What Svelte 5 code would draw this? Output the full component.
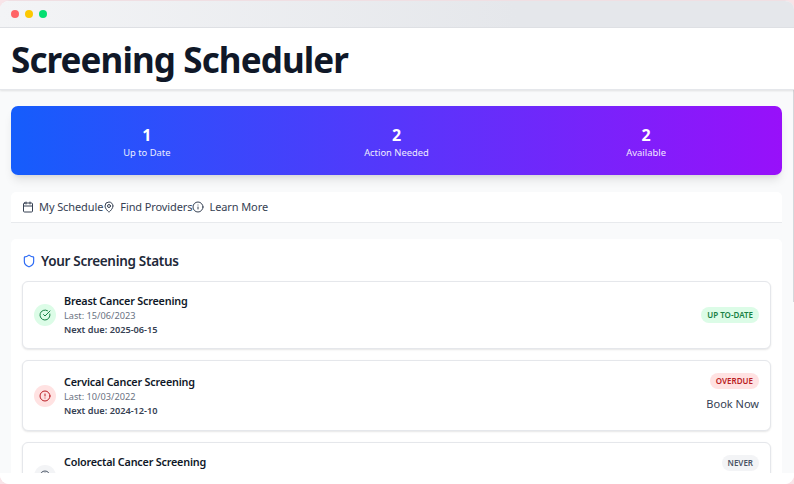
<script>
  const stats = [
    { value: 1, label: 'Up to Date', w: 47 },
    { value: 2, label: 'Action Needed', w: 64 },
    { value: 2, label: 'Available', w: 38 }
  ];
  const tabs = [
    { icon: 'calendar', label: 'My Schedule' },
    { icon: 'pin', label: 'Find Providers' },
    { icon: 'info', label: 'Learn More' }
  ];
  const screenings = [
    { name: 'Breast Cancer Screening', last: '15/06/2023', next: '2025-06-15', badge: 'UP TO-DATE', tone: 'ok', icon: 'check' },
    { name: 'Cervical Cancer Screening', last: '10/03/2022', next: '2024-12-10', badge: 'OVERDUE', tone: 'late', icon: 'alert', book: true },
    { name: 'Colorectal Cancer Screening', last: 'Never', next: '2024-12-01', badge: 'NEVER', tone: 'never', icon: 'clock' }
  ];
</script>

{#snippet icon(name)}
  <svg class="icon" viewBox="0 0 24 24" aria-hidden="true">
    {#if name === 'calendar'}
      <path d="M8 2v4M16 2v4M3 10h18" /><rect x="3" y="4" width="18" height="18" rx="2" />
    {:else if name === 'pin'}
      <path d="M20 10c0 4.99-5.54 10.19-7.4 11.8a1 1 0 0 1-1.2 0C9.54 20.19 4 14.99 4 10a8 8 0 0 1 16 0" /><circle cx="12" cy="10" r="3" />
    {:else if name === 'info'}
      <circle cx="12" cy="12" r="10" /><path d="M12 16v-4M12 8h.01" />
    {:else if name === 'shield'}
      <path d="M20 13c0 5-3.5 7.5-7.66 8.95a1 1 0 0 1-.67-.01C7.5 20.5 4 18 4 13V6a1 1 0 0 1 1-1c2 0 4.5-1.2 6.24-2.72a1.17 1.17 0 0 1 1.52 0C14.51 3.81 17 5 19 5a1 1 0 0 1 1 1z" />
    {:else if name === 'check'}
      <path d="M21.8 10A10 10 0 1 1 17 3.34M9 11l3 3L22 4" />
    {:else if name === 'alert'}
      <circle cx="12" cy="12" r="10" /><path d="M12 8v4M12 16h.01" />
    {:else}
      <circle cx="12" cy="12" r="10" /><path d="M12 6v6l4 2" />
    {/if}
  </svg>
{/snippet}

<div class="window">
  <div class="titlebar"><i class="red"></i><i class="yellow"></i><i class="green"></i></div>
  <header><h1>Screening Scheduler</h1></header>
  <main>
    <section class="stats">
      {#each stats as s}
        <div class="stat"><strong>{s.value}</strong><span>{s.label}</span></div>
      {/each}
    </section>
    <nav>
      {#each tabs as t}
        <div class="tab">{@render icon(t.icon)}<span>{t.label}</span></div>
      {/each}
    </nav>
    <section class="panel">
      <h2>{@render icon('shield')}<span>Your Screening Status</span></h2>
      {#each screenings as s}
        <article class={s.tone}>
          <div class="round">{@render icon(s.icon)}</div>
          <div class="details">
            <h3>{s.name}</h3>
            <p>Last: {s.last}</p>
            <p class="next">Next due: {s.next}</p>
          </div>
          <div class="side">
            <span class="badge">{s.badge}</span>
            {#if s.book}<span class="book">Book Now</span>{/if}
          </div>
        </article>
      {/each}
    </section>
  </main>
  <footer></footer>
  <div class="scroll"></div>
</div>

<style>
  :global(body) { margin: 0; background: #f8e4e8; overflow: hidden; }
  * { box-sizing: border-box; }
  h1, h2, h3, p { margin: 0; }
  .window {
    position: relative; width: 794px; height: 484px; border-top: 1px solid #f0dfe3;
    display: flex; flex-direction: column; overflow: hidden;
    border-radius: 9px; background: #fff;
    font-family: "Noto Sans", "Open Sans", sans-serif; color: #101828;
  }
  .titlebar {
    flex: none; height: 27px; display: flex; align-items: center; gap: 6px; padding: 0 0 0 11px;
    background: linear-gradient(90deg, #f3f4f6, #e5e7eb 65%); border-bottom: 1px solid #dfe1e5;
  }
  .titlebar i { width: 8px; height: 8px; border-radius: 50%; }
  .red { background: #ff6467; }
  .yellow { background: #fcc800; }
  .green { background: #05df72; }
  header {
    flex: none; height: 62px; padding: 9px 11px 0; background: #fff;
    border-bottom: 1px solid #e5e7eb; box-shadow: 0 1px 2px #0000001a; z-index: 1;
  }
  h1 { font-size: 35px; line-height: 46px; font-weight: 700; letter-spacing: -.9px; white-space: nowrap; }
  main { flex: none; height: 383px; padding: 16px 12px 0 11px; background: #f9fafb; overflow: hidden; }
  .stats {
    height: 69px; display: grid; grid-template-columns: repeat(3, 1fr); gap: 0; padding: 19px 11px 0;
    border-radius: 7px; color: #fff; background: linear-gradient(90deg, #155dfc, #9810fa);
    box-shadow: 0 7px 10px -2px #0000001a, 0 3px 4px -3px #0000001a;
  }
  .stat { display: flex; flex-direction: column; align-items: center; white-space: nowrap; }
  .stat strong { font-size: 16px; line-height: 20px; }
  .stat span { font-size: 9.4px; line-height: 15px; opacity: .9; }
  nav {
    height: 31px; margin-top: 17px; padding: 0 11px; display: flex; align-items: center;
    background: #fff; border-radius: 5px 5px 0 0; border-bottom: 1px solid #e8eaed;
  }
  .tab { display: flex; align-items: center; gap: 5px; color: #364153; font-size: 11px; line-height: 16px; letter-spacing: -.1px; white-space: nowrap; }
  .icon { display: block; flex: none; width: 12px; height: 12px; fill: none; stroke: currentColor; stroke-width: 2; stroke-linecap: round; stroke-linejoin: round; }
  .panel { margin-top: 16px; padding: 13px 11px 0; background: #fff; border-radius: 5px; }
  h2 { display: flex; align-items: center; gap: 5px; height: 18px; margin-bottom: 11px; font-size: 13.5px; font-weight: 600; line-height: 18px; color: #1e2939; white-space: nowrap; letter-spacing: -.3px; }
  h2 .icon { width: 14px; height: 14px; color: #2b6af5; }
  article {
    height: 68px; margin-bottom: 11px; padding: 0 11px; display: flex; align-items: center;
    border: 1px solid #e5e7eb; border-radius: 6px; box-shadow: 0 1px 2px #0000001a; background: #fff;
  }
  article.late { height: 71px; }
  .round { width: 22px; height: 22px; border-radius: 50%; display: grid; place-items: center; margin-right: 8px; }
  .ok .round, .ok .badge { background: #dcfce7; color: #178044; }
  .late .round, .late .badge { background: #ffe2e2; color: #b91c22; }
  .never .round, .never .badge { background: #f3f4f6; color: #4a5565; }
  .details { flex: 1; white-space: nowrap; }
  h3 { font-size: 10.8px; line-height: 16px; font-weight: 600; letter-spacing: -.2px; }
  p { font-size: 9.2px; line-height: 14px; color: #6a7282; }
  .next { font-weight: 600; color: #364153; }
  .side { align-self: stretch; display: flex; flex-direction: column; align-items: flex-end; justify-content: center; white-space: nowrap; }
  .late .side, .never .side { justify-content: flex-start; padding-top: 12px; }
  .badge { height: 16px; padding: 0 6px; border-radius: 8px; font-size: 8px; line-height: 16px; font-weight: 600; }
  .book { margin-top: 7px; font-size: 11px; line-height: 16px; color: #364153; }
  footer { flex: 1; background: #fff; }
  .scroll { position: absolute; right: 0; top: 27px; width: 1px; height: 274px; background: #d5d7db; }
</style>
